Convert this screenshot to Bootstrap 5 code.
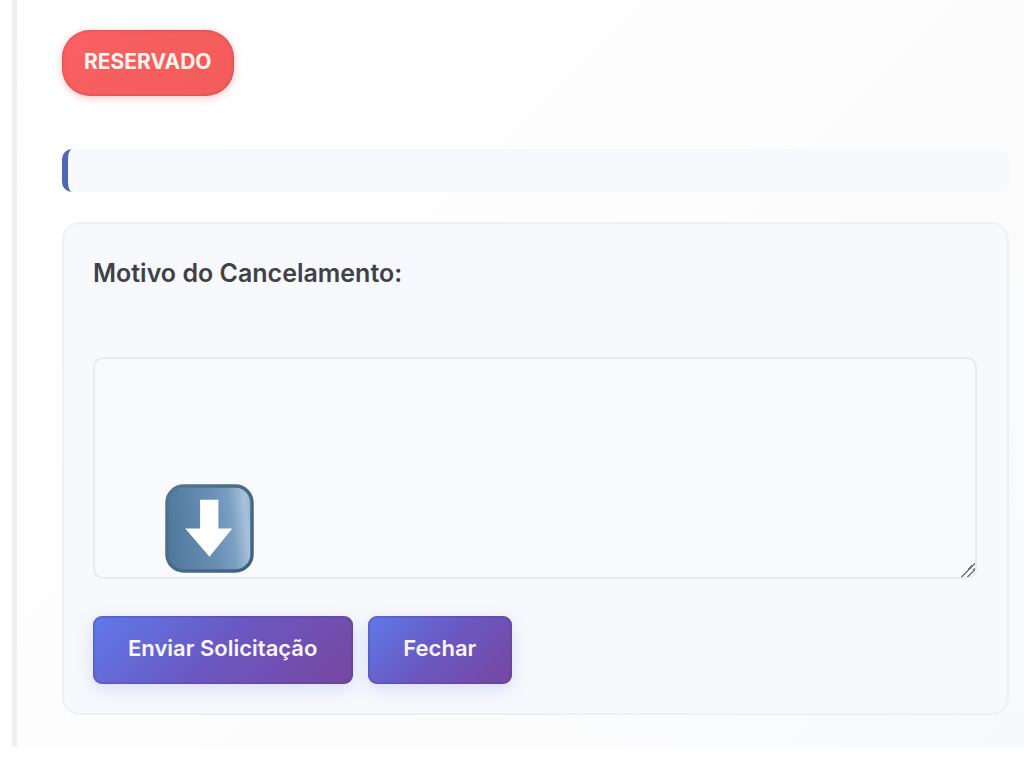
<!DOCTYPE html>
<html lang="pt-BR">
<head>
<meta charset="utf-8">
<meta name="viewport" content="width=device-width, initial-scale=1">
<title>Cancelamento</title>
<link href="https://cdn.jsdelivr.net/npm/bootstrap@5.3.0/dist/css/bootstrap.min.css" rel="stylesheet">
<style>
body { font-family: Inter, "Liberation Sans", sans-serif; background: #fff; }
.panel {
  margin-left: 12px;
  padding: 30px 15px 32px 45px;
  border-left: 5px solid #f0f0f1;
  background: linear-gradient(135deg, #fff 0%, #fdfdfd 50%, #f8f9fb 100%);
}
.status-pill {
  padding: 16px 23px 18px 22px;
  border-radius: 28px;
  font-size: 21px;
  line-height: 32px;
  font-weight: 700;
  color: #fff4ee;
  background: linear-gradient(135deg, #fb6062, #f25c5a);
  box-shadow: 0 2px 8px rgba(255, 90, 90, .35), inset 0 0 3px #b94249;
}
.info-strip {
  height: 43px;
  margin: 53px 0 30px;
  border-left: 6px solid #5068b4;
  border-radius: 10px;
  background: #f8f9fc;
}
.form-box {
  padding: 33px 30px 29px 29px;
  border: 2px solid #eff0f3;
  border-radius: 18px;
  background: #f8f9fc;
}
.reason-label { font-size: 25px; line-height: 32px; font-weight: 600; color: #3f4146; margin-bottom: 68px; }
.reason-input.form-control {
  height: 222px;
  border: 2px solid #e9eaec;
  border-radius: 10px;
  background: #f9fafc;
  font-size: 20px;
}
.reason-input::-webkit-resizer {
  background: linear-gradient(135deg, transparent 0 50%, #77797d 50% 57%, transparent 57% 70%, #77797d 70% 78%, transparent 78%);
}
.arrow-mark { left: 72px; bottom: 6px; width: 89px; height: 89px; pointer-events: none; }
.action-row { gap: 15px; margin-top: 37px; }
.btn-action, .btn-action:hover {
  padding: 16px 36px 20px 35px;
  border: 0;
  border-radius: 9px;
  font-size: 22px;
  line-height: 32px;
  font-weight: 600;
  color: #f8f6ff;
  background: linear-gradient(135deg, #5f7aea 0%, #6b58c2 48%, #7746a0 100%);
  box-shadow: 0 5px 18px rgba(102, 112, 234, .22), inset 0 0 3px #493f87;
}
</style>
</head>
<body>
<main class="panel">
  <div class="d-flex"><span class="status-pill">RESERVADO</span></div>
  <div class="info-strip"></div>
  <form class="form-box">
    <label class="reason-label d-block" for="motivo">Motivo do Cancelamento:</label>
    <div class="position-relative">
      <textarea class="form-control reason-input" id="motivo"></textarea>
      <svg class="arrow-mark position-absolute" viewBox="0 0 90 90" aria-hidden="true">
        <defs>
          <linearGradient id="face" x1="0" y1="0.1" x2="1" y2="0">
            <stop offset="0" stop-color="#527a9e"/><stop offset=".5" stop-color="#688fb5"/><stop offset=".72" stop-color="#7b9fc2"/><stop offset=".9" stop-color="#a8c2dc"/><stop offset="1" stop-color="#86a6c4"/>
          </linearGradient>
          <linearGradient id="rim" x1="0" y1="0" x2="1" y2="1">
            <stop offset="0" stop-color="#537590"/><stop offset="1" stop-color="#3f607f"/>
          </linearGradient>
        </defs>
        <rect x="2" y="2" width="86" height="86" rx="17" fill="url(#face)" stroke="url(#rim)" stroke-width="3.5"/>
        <path d="M35.500 16H54V45H68L45 73.500L20.500 45H35.500Z" fill="#fff"/>
      </svg>
    </div>
    <div class="action-row d-flex flex-wrap">
      <button type="button" class="btn btn-action">Enviar Solicitação</button>
      <button type="button" class="btn btn-action">Fechar</button>
    </div>
  </form>
</main>
<script src="https://cdn.jsdelivr.net/npm/bootstrap@5.3.0/dist/js/bootstrap.bundle.min.js"></script>
</body>
</html>
